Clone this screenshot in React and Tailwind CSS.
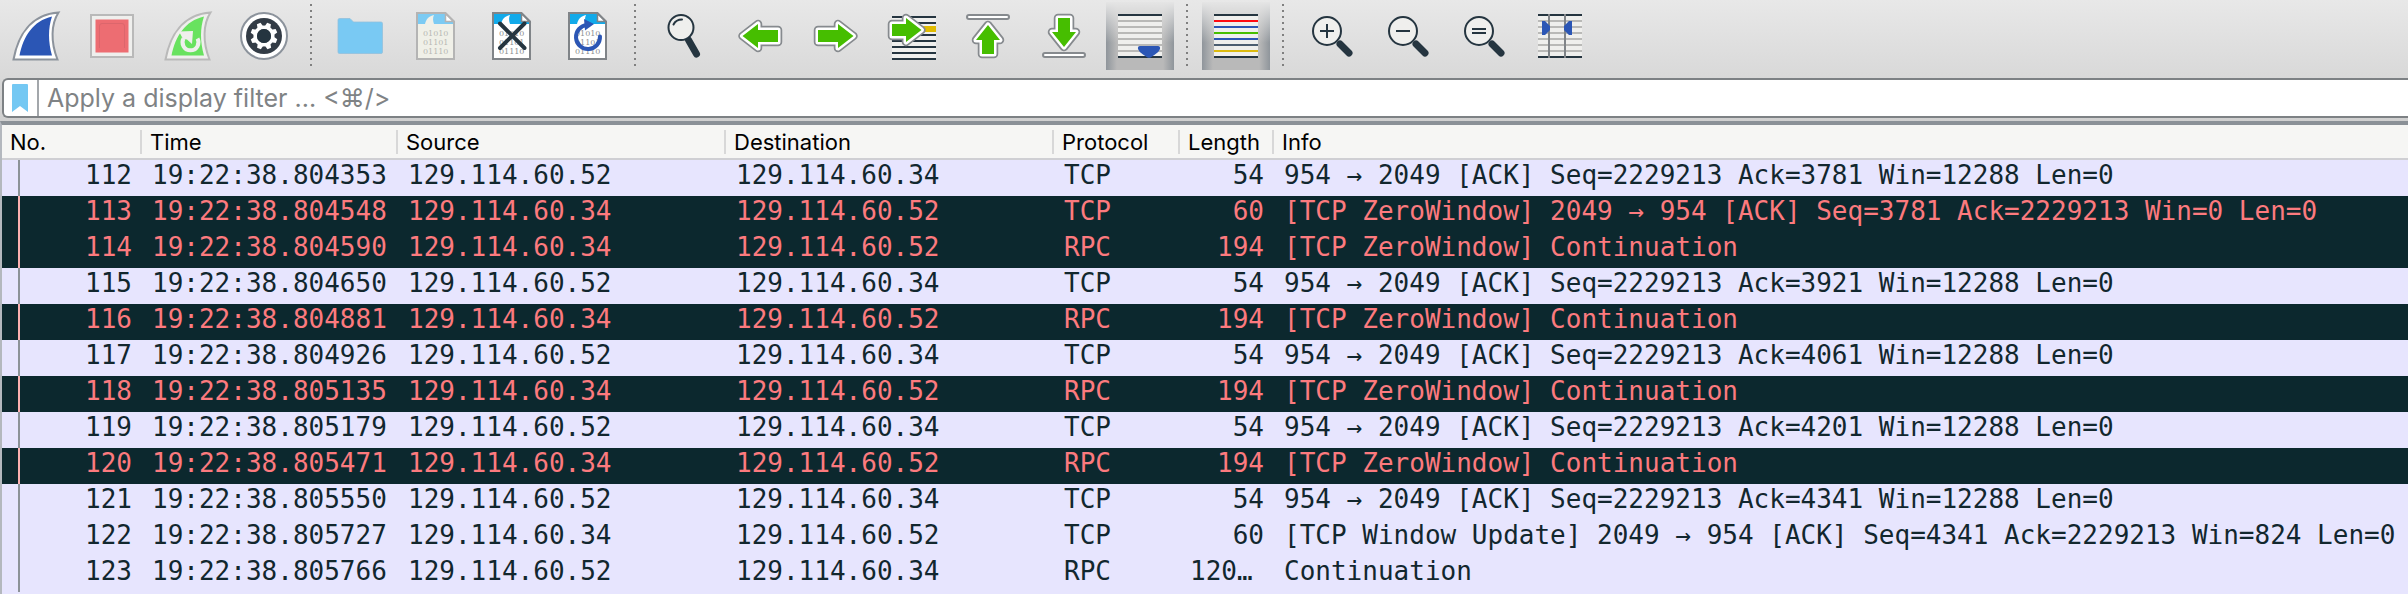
import React, { useState } from "react";

const INK = "#253540";
const BLUE = "#2b56b5";
const GREEN = "#46be00";
const EDGE = "#868a8e";
const PAPER = "#efefed";

const FIN_OUTER = "M11.5 57.5 C16 33 29 12.5 56.5 10.5 C49 22 48.5 40 55.5 57.5 Z";
const FIN_INNER = "M17.5 53.5 C21.5 34 31 19 50 14.5 C46 26 46 40 50 53.5 Z";

const Icon = ({ children }) => (
    <svg viewBox="0 0 68 68" className="block size-17" aria-hidden="true">
        {children}
    </svg>
);

const StartIcon = () => (
    <Icon>
        <path d={FIN_OUTER} fill="#fff" stroke="#8c939c" strokeWidth="2" />
        <path d={FIN_INNER} fill={BLUE} />
    </Icon>
);

const StopIcon = () => (
    <Icon>
        <rect x="13" y="13" width="42" height="42" fill={PAPER} stroke="#b9b9b9" strokeWidth="2" />
        <rect x="17.5" y="17.5" width="33" height="33" fill="#ed6d72" />
        <path d="M21.5 46 V24 Q21.5 21.5 24 21.5 H44 Q46.5 21.5 46.5 24 V46" fill="none" stroke="#dc666c" />
    </Icon>
);

const RestartIcon = () => (
    <Icon>
        <path d={FIN_OUTER} fill={PAPER} stroke="#b9b9b9" strokeWidth="2" />
        <path d={FIN_INNER} fill="#68e25f" />
        <path d="M43.5 36.5 A8 8 0 1 1 29.5 36.5" fill="none" stroke={PAPER} strokeWidth="4" />
        <path d="M25 29.5 L39 29 L38 42 L33 37.5 L29 37 Z" fill={PAPER} />
    </Icon>
);

const OptionsIcon = () => (
    <Icon>
        <circle cx="34" cy="34" r="23" fill="#fff" stroke="#8c939c" strokeWidth="2" />
        <circle cx="34" cy="34" r="18" fill="#333c46" />
        {[0, 45, 90, 135, 180, 225, 270, 315].map((a) => (
            <path key={a} d="M31 25 L32 20.5 H36 L37 25 Z" fill="#fff" transform={`rotate(${a + 22} 34 34)`} />
        ))}
        <circle cx="34" cy="34" r="8.8" fill="none" stroke="#fff" strokeWidth="3.6" />
        <circle cx="34" cy="34" r="7" fill={INK} />
    </Icon>
);

const OpenIcon = () => (
    <Icon>
        <path d="M12 18 Q12 16.5 13.5 16.5 H24 L27.5 20 H55 Q56.5 20 56.5 21.5 V50 Q56.5 51.5 55 51.5 H13.5 Q12 51.5 12 50 Z" fill="#79c9f3" stroke="#93c0dc" strokeWidth="0.8" />
    </Icon>
);

const FileBase = ({ faded, children }) => {
    const edge = faded ? "#b4b4b4" : "#808488";
    return (
        <Icon>
            <path d="M15 11 H43.5 L52 19.5 V57 H15 Z" fill={faded ? "#f0f0e8" : "#fff"} />
            <path d="M16 12 H43 V20 H51 V22 H16 Z" fill={faded ? "#7ccbf3" : "#12aaea"} />
            <path d="M23 22 C24 17 27 14 32 13 C30.5 16 31 19 32 22 Z" fill={faded ? "#f0f0e8" : "#fff"} />
            <path d="M43.5 11.5 V19.5 H51.5 Z" fill="#fff" stroke={edge} strokeWidth="1.5" />
            <path d="M15 11 H43.5 L52 19.5 V57 H15 Z" fill="none" stroke={edge} strokeWidth="2" />
            <g fill={faded ? "#b8b8b4" : "#8d9194"} fontFamily="DejaVu Serif, serif" fontSize="8">
                <text x="21" y="34">01010</text>
                <text x="21" y="43">01101</text>
                <text x="21" y="52">01110</text>
            </g>
            {children}
        </Icon>
    );
};

const SaveIcon = () => <FileBase faded />;

const CloseIcon = () => (
    <FileBase>
        <path d="M22 21.5 L46.5 46 M46.5 21.5 L22 46" stroke={INK} strokeWidth="4" strokeLinecap="round" />
    </FileBase>
);

const ReloadIcon = () => (
    <FileBase>
        <path d="M46 34.5 A12 12 0 1 1 33 23" fill="none" stroke={BLUE} strokeWidth="4" strokeLinecap="round" />
        <path d="M30 17 L40 22 L31 28.5 Z" fill={BLUE} />
    </FileBase>
);

const FindIcon = () => (
    <Icon>
        <path d="M38.5 38 L46.5 52" stroke={INK} strokeWidth="7" strokeLinecap="round" />
        <circle cx="31" cy="25.5" r="12.5" fill={PAPER} stroke={INK} strokeWidth="2" />
        <path d="M23.5 22.5 Q26 17.5 32 17.5" fill="none" stroke={INK} strokeWidth="2" strokeLinecap="round" />
    </Icon>
);

// green shape with a white rim and a grey outline
const Arrow = ({ d }) => (
    <g strokeLinejoin="round">
        <path d={d} stroke={EDGE} strokeWidth="8.5" />
        <path d={d} stroke="#fff" strokeWidth="5" />
        <path d={d} fill={GREEN} />
    </g>
);

const BackIcon = () => (
    <Icon>
        <Arrow d="M16.5 34 L32 22 V28 H52 V40 H32 V46 Z" />
    </Icon>
);

const ForwardIcon = () => (
    <Icon>
        <Arrow d="M51.5 34 L36 22 V28 H16 V40 H36 V46 Z" />
    </Icon>
);

const Stripes = ({ colors }) => (
    <>
        <rect x="12" y="12" width="44" height="44" fill={PAPER} />
        {colors.map((c, i) => (
            <rect key={i} x="12" y={12 + i * 6} width="44" height="2" fill={c} />
        ))}
    </>
);

const GoToIcon = () => (
    <Icon>
        <rect x="14" y="14" width="44" height="44" fill={PAPER} />
        {[14, 20, 32, 38, 44, 50, 56].map((y) => (
            <rect key={y} x="14" y={y} width="44" height="2" fill={INK} />
        ))}
        <rect x="14" y="24" width="44" height="6" fill="#e0bb00" />
        <Arrow d="M14 22 H28 V16 L43.5 28 L28 40 V34 H14 Z" />
    </Icon>
);

const FirstIcon = () => (
    <Icon>
        <rect x="13" y="13" width="42" height="4" rx="2" fill="#fff" stroke={EDGE} strokeWidth="2" />
        <Arrow d="M34 23 L46 38 H40 V52 H28 V38 H22 Z" />
    </Icon>
);

const LastIcon = () => (
    <Icon>
        <Arrow d="M34 45 L46 30 H40 V16 H28 V30 H22 Z" />
        <rect x="13" y="51" width="42" height="4" rx="2" fill="#fff" stroke={EDGE} strokeWidth="2" />
    </Icon>
);

const GREY = "#b9b9b7";

const AutoScrollIcon = () => (
    <Icon>
        <Stripes colors={[INK, GREY, GREY, GREY, GREY, GREY, GREY, INK]} />
        <path d="M34 44 H52 Q54.5 44 54 47 Q53 50 49 52.5 L44.5 55.5 Q43 56 41.5 55.5 L37 52.5 Q33 50 32 47 Q31.5 44 34 44 Z" fill={BLUE} />
    </Icon>
);

const ColorizeIcon = () => (
    <Icon>
        <Stripes colors={[INK, "#ff0b12", BLUE, GREEN, BLUE, "#4b5d70", "#dcbb10", INK]} />
    </Icon>
);

const Lens = ({ children }) => (
    <Icon>
        <path d="M42 42 L51 51" stroke={INK} strokeWidth="7" strokeLinecap="round" />
        <circle cx="29" cy="29" r="14" fill={PAPER} stroke={INK} strokeWidth="2" />
        <g stroke={INK} strokeWidth="2">{children}</g>
    </Icon>
);

const ZoomInIcon = () => (
    <Lens>
        <path d="M22 29 H36 M29 22 V36" />
    </Lens>
);

const ZoomOutIcon = () => (
    <Lens>
        <path d="M22 29 H36" />
    </Lens>
);

const ZoomResetIcon = () => (
    <Lens>
        <path d="M22 27 H36 M22 31 H36" />
    </Lens>
);

const ResizeIcon = () => (
    <Icon>
        <Stripes colors={[INK, GREY, GREY, GREY, GREY, GREY, GREY, INK]} />
        <path d="M23 12 V56 M39 12 V56" stroke="#808488" strokeWidth="2" />
        <path d="M16 19 H19 L24 24 V28 L19 33 H16 Z M46 19 H43 L38 24 V28 L43 33 H46 Z" fill={BLUE} />
    </Icon>
);

const toolGroups = [
    [
        { label: "Start capture", icon: StartIcon },
        { label: "Stop capture", icon: StopIcon },
        { label: "Restart capture", icon: RestartIcon },
        { label: "Capture options", icon: OptionsIcon },
    ],
    [
        { label: "Open file", icon: OpenIcon },
        { label: "Save file", icon: SaveIcon },
        { label: "Close file", icon: CloseIcon },
        { label: "Reload file", icon: ReloadIcon },
    ],
    [
        { label: "Find packet", icon: FindIcon },
        { label: "Previous packet", icon: BackIcon },
        { label: "Next packet", icon: ForwardIcon },
        { label: "Go to packet", icon: GoToIcon },
        { label: "First packet", icon: FirstIcon },
        { label: "Last packet", icon: LastIcon },
        { label: "Auto scroll", icon: AutoScrollIcon, toggle: true },
    ],
    [{ label: "Colorize packets", icon: ColorizeIcon, toggle: true }],
    [
        { label: "Zoom in", icon: ZoomInIcon },
        { label: "Zoom out", icon: ZoomOutIcon },
        { label: "Normal size", icon: ZoomResetIcon },
        { label: "Resize columns", icon: ResizeIcon },
    ],
];

const columns = [
    { label: "No.", width: "w-[140px]" },
    { label: "Time", width: "w-[256px]" },
    { label: "Source", width: "w-[328px]" },
    { label: "Destination", width: "w-[328px]" },
    { label: "Protocol", width: "w-[126px]" },
    { label: "Length", width: "w-[94px]" },
    { label: "Info", width: "" },
];

const CLIENT = "129.114.60.52";
const SERVER = "129.114.60.34";

const packets = [
    { no: 112, time: "19:22:38.804353", src: CLIENT, dst: SERVER, proto: "TCP", len: "54", info: "954 → 2049 [ACK] Seq=2229213 Ack=3781 Win=12288 Len=0" },
    { no: 113, time: "19:22:38.804548", src: SERVER, dst: CLIENT, proto: "TCP", len: "60", info: "[TCP ZeroWindow] 2049 → 954 [ACK] Seq=3781 Ack=2229213 Win=0 Len=0", bad: true },
    { no: 114, time: "19:22:38.804590", src: SERVER, dst: CLIENT, proto: "RPC", len: "194", info: "[TCP ZeroWindow] Continuation", bad: true },
    { no: 115, time: "19:22:38.804650", src: CLIENT, dst: SERVER, proto: "TCP", len: "54", info: "954 → 2049 [ACK] Seq=2229213 Ack=3921 Win=12288 Len=0" },
    { no: 116, time: "19:22:38.804881", src: SERVER, dst: CLIENT, proto: "RPC", len: "194", info: "[TCP ZeroWindow] Continuation", bad: true },
    { no: 117, time: "19:22:38.804926", src: CLIENT, dst: SERVER, proto: "TCP", len: "54", info: "954 → 2049 [ACK] Seq=2229213 Ack=4061 Win=12288 Len=0" },
    { no: 118, time: "19:22:38.805135", src: SERVER, dst: CLIENT, proto: "RPC", len: "194", info: "[TCP ZeroWindow] Continuation", bad: true },
    { no: 119, time: "19:22:38.805179", src: CLIENT, dst: SERVER, proto: "TCP", len: "54", info: "954 → 2049 [ACK] Seq=2229213 Ack=4201 Win=12288 Len=0" },
    { no: 120, time: "19:22:38.805471", src: SERVER, dst: CLIENT, proto: "RPC", len: "194", info: "[TCP ZeroWindow] Continuation", bad: true },
    { no: 121, time: "19:22:38.805550", src: CLIENT, dst: SERVER, proto: "TCP", len: "54", info: "954 → 2049 [ACK] Seq=2229213 Ack=4341 Win=12288 Len=0" },
    { no: 122, time: "19:22:38.805727", src: SERVER, dst: CLIENT, proto: "TCP", len: "60", info: "[TCP Window Update] 2049 → 954 [ACK] Seq=4341 Ack=2229213 Win=824 Len=0" },
    { no: 123, time: "19:22:38.805766", src: CLIENT, dst: SERVER, proto: "RPC", len: "120…", info: "Continuation" },
];

const Separator = () => (
    <svg viewBox="0 0 12 68" className="block h-17 w-3" aria-hidden="true">
        {[2, 8, 14, 20, 26, 32, 38, 44, 50, 56, 62].map((y) => (
            <rect key={y} x="4" y={y} width="2" height="2" fill="#808080" />
        ))}
    </svg>
);

const Toolbar = () => {
    const [pressed, setPressed] = useState({ "Auto scroll": true, "Colorize packets": true });

    return (
        <div className="flex h-[78px] gap-2 px-[2px] pt-[2px]">
            {toolGroups.map((group, i) => (
                <React.Fragment key={i}>
                    {i > 0 && <Separator />}
                    {group.map(({ label, icon: Glyph, toggle }) => (
                        <button
                            key={label}
                            type="button"
                            aria-label={label}
                            aria-pressed={toggle ? pressed[label] : undefined}
                            className={
                                toggle && pressed[label]
                                    ? "size-17 bg-[linear-gradient(to_bottom,#e5e5e5,transparent_60%),linear-gradient(to_right,#8f959b,#b9b9b9_16%,#b9b9b9_84%,#8f959b)]"
                                    : "size-17"
                            }
                            onClick={() => toggle && setPressed((prev) => ({ ...prev, [label]: !prev[label] }))}
                        >
                            <Glyph />
                        </button>
                    ))}
                </React.Fragment>
            ))}
        </div>
    );
};

const FilterBar = () => (
    <div className="ml-[2px] flex h-10 items-center rounded-l-md border-2 border-r-0 border-[#7d8184] bg-white">
        <button type="button" aria-label="Filter bookmarks" className="ml-2">
            <svg viewBox="0 0 16 28" className="block h-7 w-4" aria-hidden="true">
                <path d="M1 0 H15 Q16 0 16 1 V28 L8 22 L0 28 V1 Q0 0 1 0 Z" fill="#74c8f3" />
            </svg>
        </button>
        <input
            type="text"
            aria-label="Display filter"
            placeholder="Apply a display filter ... <⌘/>"
            className="ml-[9px] h-9 flex-1 border-l-2 border-[#a3a7ab] pt-[2px] pl-2 text-[25px] outline-none placeholder:text-[#7f8385]"
        />
    </div>
);

const PacketList = () => (
    <table className="w-full table-fixed border-collapse">
        <colgroup>
            {columns.map((col) => (
                <col key={col.label} className={col.width} />
            ))}
        </colgroup>
        <thead>
            <tr className="h-[35px] bg-[#f6f6f4] shadow-[inset_0_-2px_0_#cfcfd3]">
                {columns.map((col, i) => (
                    <th key={col.label} scope="col" className="p-0 pb-[2px] text-left text-[22px] leading-6 font-normal text-black">
                        <div className={i < columns.length - 1 ? "border-r-2 border-[#d8d8d8] pl-2" : "pl-2"}>{col.label}</div>
                    </th>
                ))}
            </tr>
        </thead>
        <tbody className="font-['DejaVu_Sans_Mono',monospace] text-[26px] leading-[30px] whitespace-nowrap">
            {packets.map((p) => (
                <tr key={p.no} className={p.bad ? "bg-[#0c282e] text-[#fc7a7e]" : "bg-[#e7e5fe] text-[#12272e]"}>
                    <td className="p-0">
                        <div className={p.bad ? "ml-4 h-9 border-l-2 border-[#fbb0b0] pr-[10px] text-right" : "ml-4 h-9 border-l-2 border-[#8c9298] pr-[10px] text-right"}>
                            {p.no}
                        </div>
                    </td>
                    <td className="p-0 pb-[6px] pl-[10px]">{p.time}</td>
                    <td className="p-0 pb-[6px] pl-[10px]">{p.src}</td>
                    <td className="p-0 pb-[6px] pl-[10px]">{p.dst}</td>
                    <td className="p-0 pb-[6px] pl-[10px]">{p.proto}</td>
                    <td className={p.len.endsWith("…") ? "p-0 pb-[6px] pl-[10px]" : "p-0 pr-[10px] pb-[6px] text-right"}>{p.len}</td>
                    <td className="p-0 pb-[6px] pl-[10px]">{p.info}</td>
                </tr>
            ))}
        </tbody>
    </table>
);

const App = () => (
    <main className="flex min-h-screen flex-col overflow-hidden bg-[#e7e5fe] font-[Inter,sans-serif]">
        <header className="bg-linear-to-b from-[#e8e8e8] to-[#d0d0d0] pb-[3px]">
            <Toolbar />
            <FilterBar />
        </header>
        <section className="flex-1 border-t-4 border-l-2 border-t-[#8b9197] border-l-[#b4b8be]">
            <PacketList />
        </section>
    </main>
);

export default App;
